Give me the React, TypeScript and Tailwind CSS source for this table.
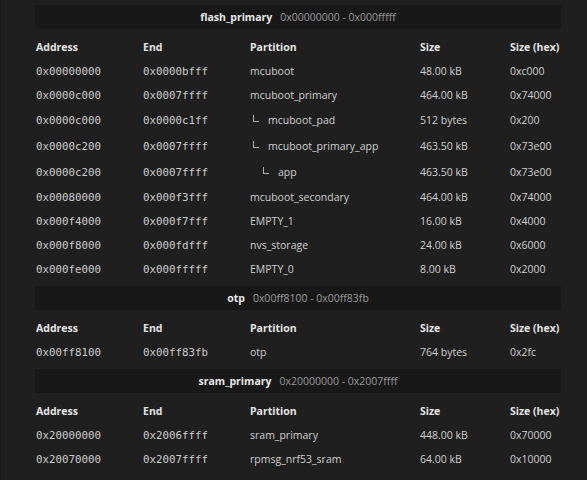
import React from "react";

type Row = { a: string; e: string; p: string; lvl: number; s: string; h: string };
type Section = { title: string; range: string; rows: Row[] };

const sections: Section[] = [
  {
    title: "flash_primary",
    range: "0x00000000 - 0x000fffff",
    rows: [
      { a: "0x00000000", e: "0x0000bfff", p: "mcuboot", lvl: 0, s: "48.00 kB", h: "0xc000" },
      { a: "0x0000c000", e: "0x0007ffff", p: "mcuboot_primary", lvl: 0, s: "464.00 kB", h: "0x74000" },
      { a: "0x0000c000", e: "0x0000c1ff", p: "mcuboot_pad", lvl: 1, s: "512 bytes", h: "0x200" },
      { a: "0x0000c200", e: "0x0007ffff", p: "mcuboot_primary_app", lvl: 1, s: "463.50 kB", h: "0x73e00" },
      { a: "0x0000c200", e: "0x0007ffff", p: "app", lvl: 2, s: "463.50 kB", h: "0x73e00" },
      { a: "0x00080000", e: "0x000f3fff", p: "mcuboot_secondary", lvl: 0, s: "464.00 kB", h: "0x74000" },
      { a: "0x000f4000", e: "0x000f7fff", p: "EMPTY_1", lvl: 0, s: "16.00 kB", h: "0x4000" },
      { a: "0x000f8000", e: "0x000fdfff", p: "nvs_storage", lvl: 0, s: "24.00 kB", h: "0x6000" },
      { a: "0x000fe000", e: "0x000fffff", p: "EMPTY_0", lvl: 0, s: "8.00 kB", h: "0x2000" },
    ],
  },
  {
    title: "otp",
    range: "0x00ff8100 - 0x00ff83fb",
    rows: [{ a: "0x00ff8100", e: "0x00ff83fb", p: "otp", lvl: 0, s: "764 bytes", h: "0x2fc" }],
  },
  {
    title: "sram_primary",
    range: "0x20000000 - 0x2007ffff",
    rows: [
      { a: "0x20000000", e: "0x2006ffff", p: "sram_primary", lvl: 0, s: "448.00 kB", h: "0x70000" },
      { a: "0x20070000", e: "0x2007ffff", p: "rpmsg_nrf53_sram", lvl: 0, s: "64.00 kB", h: "0x10000" },
    ],
  },
];

const grid = "grid grid-cols-[107px_107px_170px_90px_1fr] items-center pl-[1px] pt-[2px]";
const mono = "font-['DejaVu_Sans_Mono',monospace] text-[10.8px] text-[#cdcdcd]";

function Tree({ lvl }: { lvl: number }) {
  if (lvl === 0) return null;
  return (
    <span
      className={
        (lvl === 2 ? "ml-[13px] " : "ml-[3px] ") +
        "inline-block w-[6px] h-[7px] border-l border-b border-[#b0b0b0] mr-[9px] -translate-y-[3px]"
      }
    />
  );
}

export default function App() {
  return (
    <div className="w-[587px] h-[480px] bg-[#1f1f1f] border-l border-[#181818] font-['Open_Sans',sans-serif] text-[10.5px] text-[#d0d0d0] overflow-hidden">
      <div className="pl-[34px] pr-[26px] pt-[5px]">
        {sections.map((sec, si) => (
          <div key={si} className={si > 0 ? "mt-[5px]" : ""}>
            <div className="h-[24px] pt-[2px] bg-[#181818] flex items-center justify-center gap-[8px]">
              <span className="font-bold text-[#e8e8e8]">{sec.title}</span>
              <span className="text-[#9a9a9a]">{sec.range}</span>
            </div>
            <div className={grid + " h-[24px] mt-[6px] font-bold text-[#e4e4e4]"}>
              <span>Address</span>
              <span>End</span>
              <span>Partition</span>
              <span>Size</span>
              <span>Size (hex)</span>
            </div>
            {sec.rows.map((r, ri) => (
              <div key={ri} className={grid + (r.lvl > 0 ? " h-[26px]" : " h-[24px]")}>
                <span className={mono}>{r.a}</span>
                <span className={mono}>{r.e}</span>
                <span className="flex items-center">
                  <Tree lvl={r.lvl} />
                  {r.p}
                </span>
                <span>{r.s}</span>
                <span>{r.h}</span>
              </div>
            ))}
          </div>
        ))}
      </div>
    </div>
  );
}
